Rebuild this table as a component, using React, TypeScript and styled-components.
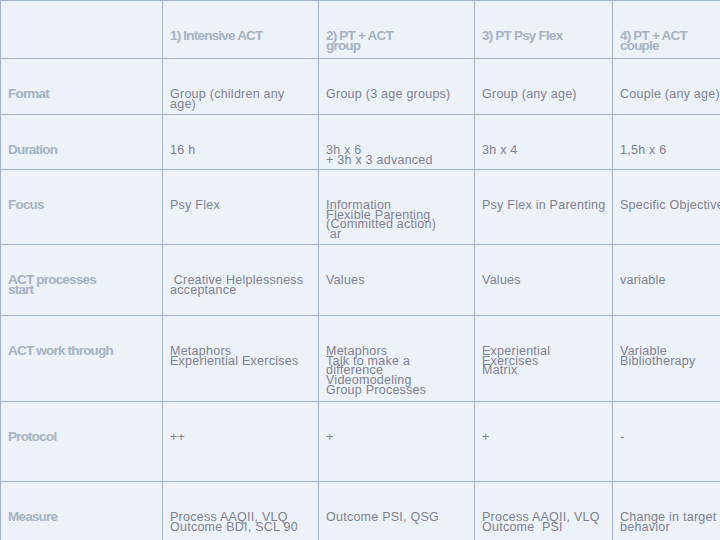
import React from "react";
import styled, { createGlobalStyle } from "styled-components";

const Global = createGlobalStyle`
  html, body { margin: 0; padding: 0; background: #edf1f8; }
  body { width: 720px; height: 540px; overflow: hidden; }
`;

const Frame = styled.div`
  width: 720px;
  height: 540px;
  overflow: hidden;
  background: #edf1f8;
`;

const Table = styled.div`
  display: grid;
  grid-template-columns: 162px 156px 156px 138px 170px;
  grid-template-rows: 58px 56px 55px 75px 71px 86px 80px 80px;
  width: max-content;
  border-left: 1px solid #a3b2c5;
  border-top: 1px solid #a3b2c5;
  box-sizing: border-box;
`;

const Cell = styled.div<{ $head?: boolean }>`
  box-sizing: border-box;
  border-right: 1px solid #a3b2c5;
  border-bottom: 1px solid #a3b2c5;
  padding: ${(p) => (p.$head ? "30px" : "31px")} 7px 0 7px;
  overflow: hidden;
  white-space: pre;
  line-height: 9.7px;
  font-family: "Liberation Sans", Arial, sans-serif;
  font-size: ${(p) => (p.$head ? "13.5px" : "12.5px")};
  font-weight: ${(p) => (p.$head ? 700 : 400)};
  letter-spacing: ${(p) => (p.$head ? "-0.8px" : "0.25px")};
  color: ${(p) => (p.$head ? "#a5b3c4" : "#7d8191")};
`;

const header = ["", "1) Intensive ACT", "2) PT + ACT\ngroup", "3) PT Psy Flex", "4) PT + ACT\ncouple"];

const rows: string[][] = [
  ["Format", "Group (children any\nage)", "Group (3 age groups)", "Group (any age)", "Couple (any age)"],
  ["Duration", "16 h", "3h x 6\n+ 3h x 3 advanced", "3h x 4", "1,5h x 6"],
  ["Focus", "Psy Flex", "Information\nFlexible Parenting\n(Committed action)\n ar", "Psy Flex in Parenting", "Specific Objective"],
  ["ACT processes\nstart", " Creative Helplessness\nacceptance", "Values", "Values", "variable"],
  [
    "ACT work through",
    "Metaphors\nExperiential Exercises",
    "Metaphors\nTalk to make a\ndifference\nVideomodeling\nGroup Processes",
    "Experiential\nExercises\nMatrix",
    "Variable\nBibliotherapy",
  ],
  ["Protocol", "++", "+", "+", "-"],
  ["Measure", "Process AAQII, VLQ\nOutcome BDI, SCL 90", "Outcome PSI, QSG", "Process AAQII, VLQ\nOutcome  PSI", "Change in target\nbehavior"],
];

export default function App() {
  return (
    <Frame>
      <Global />
      <Table>
        {header.map((h, i) => (
          <Cell key={`h${i}`} $head>
            {h}
          </Cell>
        ))}
        {rows.map((r, ri) =>
          r.map((c, ci) => (
            <Cell key={`${ri}-${ci}`} $head={ci === 0}>
              {c}
            </Cell>
          ))
        )}
      </Table>
    </Frame>
  );
}
